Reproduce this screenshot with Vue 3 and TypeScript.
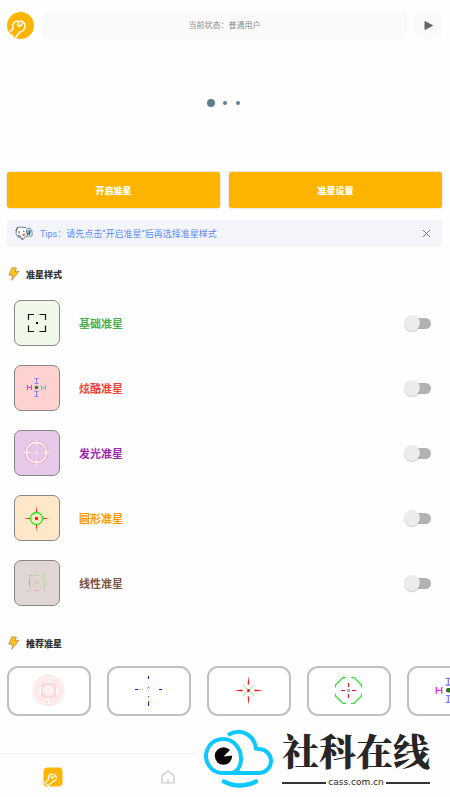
<script setup lang="ts">
import { ref } from 'vue'

interface Part {
  d: string
  stroke?: string
  fill?: string
  width?: number
  dash?: string
  opacity?: number
}

interface StyleRow {
  name: string
  tone: string
  parts: Part[]
  on: boolean
}

const cool: Part[] = [
  { d: 'M-9-2.500V2.500M-5-2.500V2.500M-9 0H-5', stroke: '#f02cf0' },
  { d: 'M9-2.500V2.500M5-2.500V2.500M9 0H5', stroke: '#2fd8ee' },
  { d: 'M-2-9H2M-2-4H2M0-9V-4M-2 9H2M-2 4H2M0 9V4', stroke: '#8580fa' },
  { d: 'M-1.300 0A1.300 1.300 0 1 1 1.300 0A1.300 1.300 0 1 1-1.300 0', stroke: '#234d12', fill: '#1c9c10', width: 0.8 }
]

const styles = ref<StyleRow[]>([
  {
    name: '基础准星',
    tone: 'green',
    on: false,
    parts: [
      { d: 'M-8-2.500V-8H-2.500M3-8H9V-2.500M9 3V9H3M-2.500 9H-8V3', stroke: '#151713', width: 1.2 },
      { d: 'M-.500-.500H1.500V1.500H-.500Z', fill: '#000' }
    ]
  },
  { name: '炫酷准星', tone: 'red', on: false, parts: cool },
  {
    name: '发光准星',
    tone: 'purple',
    on: false,
    parts: [
      { d: 'M-10 0A10 10 0 1 1 10 0A10 10 0 1 1-10 0M0-12V-7M0 12V7M-12 0H-7M12 0H7', stroke: '#f3a0b4', width: 3.6, opacity: 0.55 },
      { d: 'M-10 0A10 10 0 1 1 10 0A10 10 0 1 1-10 0M0-12.5V-7M0 12.5V7M-12.5 0H-7M12.5 0H7', stroke: '#fff4f5', width: 1.3 },
      { d: 'M-1-1H1V1H-1Z', fill: '#fff4f5' }
    ]
  },
  {
    name: '圆形准星',
    tone: 'orange',
    on: false,
    parts: [
      { d: 'M0-12L.7-5H-.7ZM0 14L.7 7H-.7ZM-13 1L-6 .3V1.700ZM13 1L6 .3V1.700Z', fill: '#fb1710' },
      { d: 'M-6 1A6 6 0 1 1 6 1A6 6 0 1 1-6 1', stroke: '#27ef20', width: 1.3 },
      { d: 'M-1.700 1A1.700 1.700 0 1 1 1.700 1A1.700 1.700 0 1 1-1.700 1', fill: '#fb1710' }
    ]
  },
  {
    name: '线性准星',
    tone: 'brown',
    on: false,
    parts: [
      { d: 'M-9-9L-5-5M-3-3L5 5M9.500 9.500L6 6M3-3L-4 4', stroke: '#cdcb9d', width: 0.9 },
      { d: 'M9.500-9.500L5-5M8-4V0M-2.500-7H3', stroke: '#8ddb76', width: 0.9, dash: '2 1' },
      { d: 'M-9 9.500L-5 5.500M-2.500 8H3', stroke: '#e49bbb', width: 0.9, dash: '2 1' },
      { d: 'M-7-4V4', stroke: '#c28781', width: 0.9, dash: '2 1' },
      { d: 'M8 1V5M-6-7H-3', stroke: '#9dbd95', width: 0.9, dash: '2 1' }
    ]
  }
])

const picks: { label: string; view: string; parts: Part[] }[] = [
  {
    label: 'halo',
    view: '-17.5 -17.5 36 36',
    parts: [
      { d: 'M-16 0A16 16 0 1 1 16 0A16 16 0 1 1-16 0', fill: '#ffe9e8', opacity: 0.8 },
      { d: 'M-13 0A13 13 0 1 1 13 0A13 13 0 1 1-13 0', stroke: '#ffc9c7', width: 3, opacity: 0.45 },
      { d: 'M-7.5 0A7.5 7.5 0 1 1 7.5 0A7.5 7.5 0 1 1-7.5 0', stroke: '#ffc2c0', width: 3, opacity: 0.5 },
      { d: 'M-13.3 0A13.3 13.3 0 1 1 13.3 0A13.3 13.3 0 1 1-13.3 0M-2.8 0A2.8 2.8 0 1 1 2.8 0A2.8 2.8 0 1 1-2.8 0M0-13V-8M0 13V8M-13 0H-8M13 0H8M-3.5-8H3.5M-3.5 8H3.5M-8-3.5V3.5M8-3.5V3.5', stroke: '#fff', width: 1.1 }
    ]
  },
  {
    label: 'cross',
    view: '-17.5 -17.5 36 36',
    parts: [
      { d: 'M-13.500-1H-10.500M10.500-1H13.500M0-14.500V-11.500M0 12.500V15.500', stroke: '#1215e4' },
      { d: 'M-9.500-1H-5.500', stroke: '#f3b9b9' },
      { d: 'M0-3.500V-2.500M0 10.500V12.500', stroke: '#e33b3b' },
      { d: 'M-1.500-2H-.500M.500-2H1.500M-.500 0H.500', stroke: '#7fe0cf' },
      { d: 'M0 5.500V6.500', stroke: '#444' }
    ]
  },
  {
    label: 'star',
    view: '-17.5 -17.5 36 36',
    parts: [
      { d: 'M-5.5-5.5L5.5 5.5M5.5-5.5L-5.5 5.5', stroke: '#8ff08a' },
      { d: 'M0-14.500L.9-6H-.9ZM0 14.500L.9 6H-.9ZM-14.500 0L-6-.9V.9ZM14.500 0L6-.9V.9Z', fill: '#ee1c1c' },
      { d: 'M-1.5 0A1.5 1.5 0 1 1 1.5 0A1.5 1.5 0 1 1-1.5 0', fill: '#ee1c1c' }
    ]
  },
  {
    label: 'octagon',
    view: '-17.5 -17.5 36 36',
    parts: [
      { d: 'M-2.500-13H-5.500L-13-5.500V-3M2.500-13H5.500L13-5.500V-3M-2.500 13H-5.500L-13 5.500V3M2.500 13H5.500L13 5.500V3', stroke: '#29e42b', width: 1.2 },
      { d: 'M0-7.500V-3.500M0 7.500V3.500M-7.500 0H-3.500M7.500 0H3.500', stroke: '#e01b1b', width: 1.2 },
      { d: 'M-1-1H1V1H-1Z', stroke: '#8a8a8a', width: 0.8 }
    ]
  },
  { label: 'cool', view: '-13 -13 27 27', parts: cool }
]

const showTip = ref(true)
</script>

<template>
  <div class="page">
    <header class="top">
      <svg class="logo" viewBox="0 0 27 27" aria-hidden="true">
        <defs><clipPath id="disc"><circle cx="13.5" cy="13.5" r="13.5" /></clipPath></defs>
        <g clip-path="url(#disc)">
          <rect width="27" height="27" fill="#ffb400" />
          <g fill="none" stroke="#fff" stroke-width="1.5" stroke-linecap="round" stroke-linejoin="round">
            <path d="M1 21.500L6 17C4.500 12 8 8 12.500 9.500C17.500 8.500 19 13 17.500 16.500C16.500 19.500 14 19.500 13 20L8 26" />
            <path d="M15.500 11.500L12.500 14.500L10.500 13.500L11.500 11M4 22.500L6 24L5 25.500" />
          </g>
        </g>
      </svg>
      <p class="status">当前状态：普通用户</p>
      <button class="play" type="button" aria-label="play">
        <svg viewBox="0 0 11 11"><path d="M2 1.500L9.500 5.500L2 9.500Z" fill="#666" stroke="#666" stroke-linejoin="round" /></svg>
      </button>
    </header>

    <div class="banner"><i class="dot big"></i><i class="dot"></i><i class="dot"></i></div>

    <div class="actions">
      <button type="button">开启准星</button>
      <button type="button">准星设置</button>
    </div>

    <div v-if="showTip" class="tip">
      <svg class="mascot" viewBox="0 0 18 15" aria-hidden="true">
        <path d="M1.500 4L2 1.500L5 1L9 1.500L11 1.500L12.500 3L15 2L17 5L17 10H12L9 12L8 13.500L6.500 12L3 11L1 8Z" fill="#fff" stroke="#566673" stroke-width=".8" stroke-linejoin="round" />
        <path d="M11 4L15 2.500L17 5V9.500L12 10Z" fill="#b9d7ea" />
        <path d="M.5 5L3 2M4 5V7.500M8 5L9.500 5.500M11.500 4L12.500 9.500M14 4L14.500 9M16.500 5L13 8M3 9.500L6 10.500M7 12V14" fill="none" stroke="#40515e" />
        <path d="M7.500 7.500H10V10H7.500Z" fill="#ee7775" />
      </svg>
      <span class="tip-text">Tips：请先点击“开启准星”后再选择准星样式</span>
      <button type="button" class="close" aria-label="close" @click="showTip = false">
        <svg viewBox="0 0 9 9"><path d="M1 1L8 8M8 1L1 8" stroke="#777" fill="none" /></svg>
      </button>
    </div>

    <h2 class="heading">
      <svg class="bolt" viewBox="0 0 12 14" aria-hidden="true"><path d="M4 .7L8.500 1L7 4.700L11 4.200L8 8.300L3.500 13.300L5 8.500L.8 8Z" fill="#ffc21f" stroke="#9a7430" stroke-width=".6" stroke-linejoin="round" /></svg>
      准星样式
    </h2>

    <ul class="styles">
      <li v-for="(row, i) in styles" :key="row.name" :class="row.tone">
        <span class="thumb">
          <svg viewBox="-13.5 -13.5 28 28" aria-hidden="true">
            <path v-for="(p, k) in row.parts" :key="k" :d="p.d" :stroke="p.stroke ?? 'none'" :fill="p.fill ?? 'none'" :stroke-width="p.width ?? 1" :stroke-dasharray="p.dash" :opacity="p.opacity" />
          </svg>
        </span>
        <label :for="'switch-' + i">{{ row.name }}</label>
        <input :id="'switch-' + i" v-model="row.on" type="checkbox" role="switch" />
      </li>
    </ul>

    <h2 class="heading second">
      <svg class="bolt" viewBox="0 0 12 14" aria-hidden="true"><path d="M4 .7L8.500 1L7 4.700L11 4.200L8 8.300L3.500 13.300L5 8.500L.8 8Z" fill="#ffc21f" stroke="#9a7430" stroke-width=".6" stroke-linejoin="round" /></svg>
      推荐准星
    </h2>

    <div class="picks">
      <button v-for="pick in picks" :key="pick.label" type="button" :aria-label="pick.label">
        <svg :viewBox="pick.view">
          <path v-for="(p, k) in pick.parts" :key="k" :d="p.d" :stroke="p.stroke ?? 'none'" :fill="p.fill ?? 'none'" :stroke-width="p.width ?? 1" :opacity="p.opacity" />
        </svg>
      </button>
    </div>

    <nav class="tabs">
      <a href="#tools" aria-label="tools">
        <svg class="tool" viewBox="0 0 20 20">
          <rect x=".5" y=".5" width="19" height="19" rx="4" fill="#ffb400" />
          <g fill="none" stroke="#fff" stroke-width="1.200" stroke-linecap="round" stroke-linejoin="round">
            <path d="M1.500 16L5.500 12.500C4.500 9 7 6.500 10 7C13.500 7.500 14 11 12.500 13C11.500 14.500 10 14 9.500 14.500L5.500 19" />
            <path d="M11.500 9L9.500 11L8 10.500L8.500 8.500M3.500 17L4.500 18" />
          </g>
        </svg>
      </a>
      <a href="#home" aria-label="home">
        <svg class="home" viewBox="0 0 14 14"><path d="M1 5.500L7 1L13 5.500V13H1ZM7 13V9.500" fill="none" stroke="#c3c6d1" stroke-width="1.200" stroke-linejoin="round" /></svg>
      </a>
    </nav>

    <aside class="mark">
      <svg class="cloud" viewBox="0 0 70 60" aria-hidden="true">
        <g fill="none" stroke="#0cc8ff" stroke-width="4" stroke-linecap="butt">
          <path d="M29 43.500C38 38 38 24 31 16A17 17 0 1 0 19 44H54A12 12 0 0 0 54 20L51 19.500C49 4 34-1 23 6" />
          <path d="M19 52.500Q34 60.500 51 52.500" stroke-width="4.500" stroke-linecap="round" />
        </g>
        <circle cx="18.500" cy="27" r="8.700" fill="#080808" />
        <path d="M18.500 27.500L25.500 20.500L28 26.500Z" fill="#fefefe" />
      </svg>
      <div class="mark-text">
        <strong>社科在线</strong>
        <span class="domain">cass.com.cn</span>
      </div>
    </aside>
  </div>
</template>

<style>
body {
  margin: 0;
  background: #fefefe;
}
</style>

<style scoped>
.page {
  position: relative;
  box-sizing: border-box;
  display: flex;
  flex-direction: column;
  min-height: 100vh;
  overflow: hidden;
  font-family: Roboto, "Noto Sans CJK SC", sans-serif;
  color: #333;
}
svg {
  display: block;
  overflow: visible;
}
button {
  padding: 0;
  border: 0;
  font-family: inherit;
  cursor: pointer;
}
.top {
  display: flex;
  align-items: center;
  gap: 8px;
  padding: 12px 8px 0 7px;
}
.logo {
  width: 27px;
  height: 27px;
  flex: none;
}
.status {
  flex: 1;
  margin: 0;
  border-radius: 5px;
  background: #fafafa;
  color: #8c8c8c;
  font-size: 8px;
  line-height: 27px;
  text-align: center;
}
.play {
  display: grid;
  place-items: center;
  width: 27px;
  height: 27px;
  border-radius: 7px;
  background: #fafafa;
}
.play svg {
  width: 11px;
  height: 11px;
}
.banner {
  display: flex;
  align-items: center;
  justify-content: center;
  gap: 9px;
  height: 127px;
  margin-bottom: 6px;
  padding-right: 3px;
}
.dot {
  width: 4px;
  height: 4px;
  border-radius: 50%;
  background: #607d8b;
}
.dot.big {
  width: 8px;
  height: 8px;
  margin-right: -1px;
}
.actions {
  display: grid;
  grid-template-columns: 1fr 1fr;
  gap: 9px;
  padding: 0 8px 0 7px;
}
.actions button {
  height: 36px;
  border-radius: 3px;
  background: #ffb400;
  box-shadow: 0 0 2px rgba(90, 70, 20, 0.4);
  color: #fff;
  font-size: 9px;
  font-weight: 900;
}
.tip {
  display: flex;
  align-items: center;
  height: 27px;
  margin: 12px 8px 0 7px;
  padding: 0 11px 0 8px;
  border-radius: 4px;
  background: #f4f5fa;
}
.mascot {
  width: 18px;
  height: 15px;
  margin-right: 7px;
}
.tip-text {
  flex: 1;
  color: #5b8bfa;
  font-size: 9px;
}
.close {
  background: none;
}
.close svg {
  width: 9px;
  height: 9px;
}
.heading {
  display: flex;
  align-items: center;
  gap: 6px;
  height: 16px;
  margin: 19px 0 18px 8px;
  font-size: 9px;
  font-weight: 900;
}
.bolt {
  width: 12px;
  height: 14px;
}
.styles {
  display: flex;
  flex-direction: column;
  gap: 19px;
  margin: 0;
  padding: 0 19px 0 14px;
  list-style: none;
}
.styles li {
  display: flex;
  align-items: center;
}
.thumb {
  box-sizing: border-box;
  display: grid;
  place-items: center;
  width: 46px;
  height: 46px;
  border: 1px solid #878787;
  border-radius: 7px;
}
.thumb svg {
  width: 28px;
  height: 28px;
}
.styles label {
  flex: 1;
  padding-left: 19px;
  font-size: 11px;
  font-weight: 700;
}
.green { color: #4caf50; }
.red { color: #f44336; }
.purple { color: #9c27b0; }
.orange { color: #ff9800; }
.brown { color: #795548; }
.green .thumb { background: #f1f8e9; }
.red .thumb { background: #ffd2d1; }
.purple .thumb { background: #e6c8e9; }
.orange .thumb { background: #ffe7c9; }
.brown .thumb { background: #e0d7d4; }
.styles input {
  appearance: none;
  position: relative;
  box-sizing: border-box;
  width: 27px;
  height: 16px;
  margin: 0;
  padding: 3px 0 2px 6px;
}
.styles input::before {
  content: "";
  display: block;
  height: 11px;
  border-radius: 6px;
  background: #b2b2b2;
}
.styles input::after {
  content: "";
  position: absolute;
  top: 0;
  left: 0;
  width: 16px;
  height: 16px;
  border-radius: 50%;
  background: #ececec;
  box-shadow: 0 1px 1px rgba(0, 0, 0, 0.2);
}
.styles input:checked::after {
  left: 11px;
}
.heading.second {
  margin-top: 29px;
  margin-bottom: 15px;
}
.picks {
  display: flex;
  gap: 16px;
  padding-left: 7px;
  overflow: hidden;
}
.picks button {
  box-sizing: border-box;
  flex: none;
  display: grid;
  place-items: center;
  width: 84px;
  height: 50px;
  border: 2px solid #c0c0c0;
  border-radius: 11px;
  background: #fff;
}
.picks svg {
  width: 36px;
  height: 36px;
}
.tabs {
  box-sizing: border-box;
  display: grid;
  grid-template-columns: repeat(4, 1fr);
  align-items: center;
  height: 44px;
  margin: auto -5px 0;
  padding-top: 3px;
  border-top: 1px solid #f3f3f3;
}
.tabs a {
  display: grid;
  place-items: center;
}
.tool {
  width: 20px;
  height: 20px;
}
.home {
  width: 14px;
  height: 14px;
}
.mark {
  position: absolute;
  right: 0;
  bottom: 0;
  display: flex;
  align-items: flex-end;
  gap: 7px;
  padding: 0 20px 8px 8px;
  background: #fefefe;
}
.cloud {
  width: 70px;
  height: 60px;
}
.mark-text {
  display: flex;
  flex-direction: column;
  gap: 4px;
  color: #262626;
}
.mark-text strong {
  font-family: "Noto Serif CJK SC", "Noto Sans CJK SC", serif;
  font-size: 37px;
  font-weight: 900;
  line-height: 44px;
}
.domain {
  display: flex;
  align-items: center;
  gap: 2px;
  font-family: "DejaVu Sans", sans-serif;
  font-size: 9px;
  line-height: 13px;
}
.domain::before,
.domain::after {
  content: "";
  flex: 1;
  height: 2px;
  background: #333;
}
</style>
